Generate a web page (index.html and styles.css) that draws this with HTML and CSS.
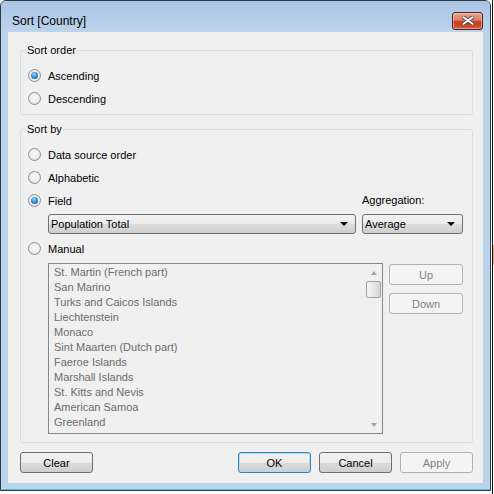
FILE: index.html
```html
<!DOCTYPE html>
<html lang="en">
<head>
    <meta charset="UTF-8">
    <meta name="viewport" content="width=device-width, initial-scale=1.0">
    <title>Sort [Country]</title>
    <link rel="stylesheet" href="styles.css">
</head>
<body>
    <div class="window">
        <div class="titlebar">
            <span class="title">Sort [Country]</span>
            <button class="close-btn">
                <svg width="12" height="9" viewBox="0 0 12 9">
                    <path d="M1.5 1.2 L10.5 7.8 M10.5 1.2 L1.5 7.8" stroke="#5e3a36" stroke-width="3.6" stroke-linecap="round"/>
                    <path d="M1.5 1.2 L10.5 7.8 M10.5 1.2 L1.5 7.8" stroke="#ffffff" stroke-width="2" stroke-linecap="round"/>
                </svg>
            </button>
        </div>
        <div class="client">
            <fieldset class="group group-order">
                <legend>Sort order</legend>
                <label class="radio-row"><span class="radio checked"></span>Ascending</label>
                <label class="radio-row"><span class="radio"></span>Descending</label>
            </fieldset>
            <fieldset class="group group-by">
                <legend>Sort by</legend>
                <label class="radio-row"><span class="radio"></span>Data source order</label>
                <label class="radio-row"><span class="radio"></span>Alphabetic</label>
                <div class="field-row">
                    <label class="radio-row"><span class="radio checked"></span>Field</label>
                    <span class="agg-label">Aggregation:</span>
                </div>
                <div class="combo-row">
                    <div class="combo combo-field">Population Total<span class="arrow"></span></div>
                    <div class="combo combo-agg">Average<span class="arrow"></span></div>
                </div>
                <label class="radio-row"><span class="radio"></span>Manual</label>
                <div class="manual-row">
                    <div class="list">
                        <ul class="list-items">
                            <li>St. Martin (French part)</li>
                            <li>San Marino</li>
                            <li>Turks and Caicos Islands</li>
                            <li>Liechtenstein</li>
                            <li>Monaco</li>
                            <li>Sint Maarten (Dutch part)</li>
                            <li>Faeroe Islands</li>
                            <li>Marshall Islands</li>
                            <li>St. Kitts and Nevis</li>
                            <li>American Samoa</li>
                            <li>Greenland</li>
                            <li>Cayman Islands</li>
                        </ul>
                        <div class="scrollbar">
                            <span class="sb-btn"><span class="sb-up"></span></span>
                            <span class="sb-thumb"></span>
                            <span class="sb-track"></span>
                            <span class="sb-btn"><span class="sb-down"></span></span>
                        </div>
                    </div>
                    <div class="move-btns">
                        <button class="btn" disabled>Up</button>
                        <button class="btn" disabled>Down</button>
                    </div>
                </div>
            </fieldset>
            <div class="footer">
                <button class="btn">Clear</button>
                <div class="footer-right">
                    <button class="btn btn-default">OK</button>
                    <button class="btn">Cancel</button>
                    <button class="btn" disabled>Apply</button>
                </div>
            </div>
        </div>
    </div>
    <div class="behind"><span class="behind-mark"></span></div>
</body>
</html>
```

FILE: styles.css
```css
/* Page behind the dialog */
body {
    margin: 0;
    background-color: white;
    display: flex;
    font-family: "Liberation Sans", Arial, sans-serif;
    font-size: 11px;
    color: #000;
}
.behind {
    width: 1px;
    height: 494px;
    margin-left: 1px;
    border-left: 1px solid #111;
    display: flex;
    flex-direction: column;
}
.behind-mark {
    margin-top: 245px;
    height: 20px;
    width: 2px;
    background-color: #f5a86c;
}

/* Window frame */
.window {
    width: 491px;
    height: 491px;
    box-sizing: border-box;
    border: 1px solid #2e3b47;
    border-radius: 6px 6px 0 0;
    background-color: #bcd3ec;
    box-shadow: inset 0 -1px 0 #4fc0d8;
}
.titlebar {
    height: 31px;
    box-sizing: border-box;
    padding: 8px 7px 0 11px;
    display: flex;
    justify-content: space-between;
    align-items: center;
    border-radius: 5px 5px 0 0;
    background: linear-gradient(#a9c4e3, #bdd3ec);
}
.title {
    font-size: 12px;
}
.close-btn {
    width: 31px;
    height: 18px;
    padding: 0;
    border: 1px solid #4a2320;
    border-radius: 3px;
    background: linear-gradient(#e8a597 0%, #d77b66 45%, #c23a1e 55%, #d35a3c 100%);
    box-shadow: inset 0 0 0 1px rgba(255, 220, 210, 0.5);
    display: flex;
    justify-content: center;
    align-items: center;
}
.close-btn svg {
    display: block;
}
.client {
    height: 451px;
    margin: 0 7px;
    padding-top: 12px;
    box-sizing: border-box;
    background-color: #f0f0f0;
}

/* Group boxes */
.group {
    margin: 0 10px 0 12px;
    padding: 7px 9px 4px 7px;
    border: 1px solid #d5dfe5;
    border-radius: 3px;
    min-width: 0;
}
.group legend {
    padding: 0 1px;
    margin-left: -2px;
    line-height: 13px;
}
.group-by {
    margin-top: 8px;
    padding-bottom: 8px;
}
.radio-row {
    height: 23px;
    display: flex;
    align-items: center;
    gap: 7px;
}
.radio {
    width: 13px;
    height: 13px;
    box-sizing: border-box;
    border-radius: 50%;
    border: 1px solid #8e8f8f;
    background: radial-gradient(circle at 50% 40%, #fcfcfc 0%, #ececec 55%, #d2d2d2 100%);
    display: flex;
    justify-content: center;
    align-items: center;
}
.radio.checked::after {
    content: "";
    width: 7px;
    height: 7px;
    border-radius: 50%;
    background: radial-gradient(circle at 45% 35%, #a6dcf9 0%, #3b8fd6 45%, #19528f 100%);
    box-shadow: 0 0 0 1px #e6f2fb;
}

/* Field row with dropdowns */
.field-row {
    display: flex;
    justify-content: space-between;
}
.agg-label {
    width: 101px;
    height: 23px;
    line-height: 23px;
}
.combo-row {
    display: flex;
    gap: 6px;
    padding-left: 20px;
    margin: 2px 0 3px;
}
.combo {
    height: 20px;
    box-sizing: border-box;
    padding: 0 7px 0 2px;
    border: 1px solid #707070;
    border-radius: 3px;
    background: linear-gradient(#f2f2f2 0%, #ebebeb 50%, #dddddd 50%, #cfcfcf 100%);
    display: flex;
    justify-content: space-between;
    align-items: center;
}
.combo-field {
    width: 308px;
}
.combo-agg {
    width: 101px;
}
.arrow {
    width: 0;
    height: 0;
    border-style: solid;
    border-width: 4px 4px 0 4px;
    border-color: #000 transparent transparent transparent;
}

/* Manual list */
.manual-row {
    display: flex;
    gap: 6px;
    padding-left: 20px;
    margin-top: 3px;
}
.list {
    width: 335px;
    height: 171px;
    box-sizing: border-box;
    border: 1px solid #828790;
    background-color: #f0f0f0;
    display: flex;
}
.list-items {
    flex: 1;
    margin: 0;
    padding: 1px 0 0 5px;
    list-style: none;
    overflow: hidden;
    line-height: 15px;
    color: #6d6d6d;
}
.scrollbar {
    width: 17px;
    display: flex;
    flex-direction: column;
    align-items: center;
}
.sb-btn {
    height: 17px;
    width: 17px;
    display: flex;
    justify-content: center;
    align-items: center;
}
.sb-up, .sb-down {
    width: 0;
    height: 0;
    border-style: solid;
}
.sb-up {
    border-width: 0 3.5px 4px 3.5px;
    border-color: transparent transparent #a3a3a3 transparent;
}
.sb-down {
    border-width: 4px 3.5px 0 3.5px;
    border-color: #a3a3a3 transparent transparent transparent;
}
.sb-thumb {
    width: 15px;
    height: 17px;
    box-sizing: border-box;
    border: 1px solid #a0a0a0;
    border-radius: 2px;
    background: linear-gradient(90deg, #f6f6f6 0%, #e6e6e6 50%, #d6d6d6 100%);
}
.sb-track {
    flex: 1;
}
.move-btns {
    width: 74px;
    padding-top: 1px;
    display: flex;
    flex-direction: column;
    gap: 8px;
}

/* Buttons */
.btn {
    font: inherit;
    color: #000;
    height: 21px;
    width: 73px;
    padding: 0;
    border: 1px solid #707070;
    border-radius: 3px;
    background: linear-gradient(#f2f2f2 0%, #ebebeb 50%, #dddddd 50%, #cfcfcf 100%);
}
.move-btns .btn {
    width: 74px;
}
.btn:disabled {
    color: #838383;
    border-color: #adb2b5;
    background: #f4f4f4;
}
.btn-default {
    border-color: #3c7fb1;
    box-shadow: inset 0 0 0 1px #a8def8;
}
.footer {
    display: flex;
    justify-content: space-between;
    margin: 9px 10px 0 12px;
}
.footer-right {
    display: flex;
    gap: 8px;
}
```
